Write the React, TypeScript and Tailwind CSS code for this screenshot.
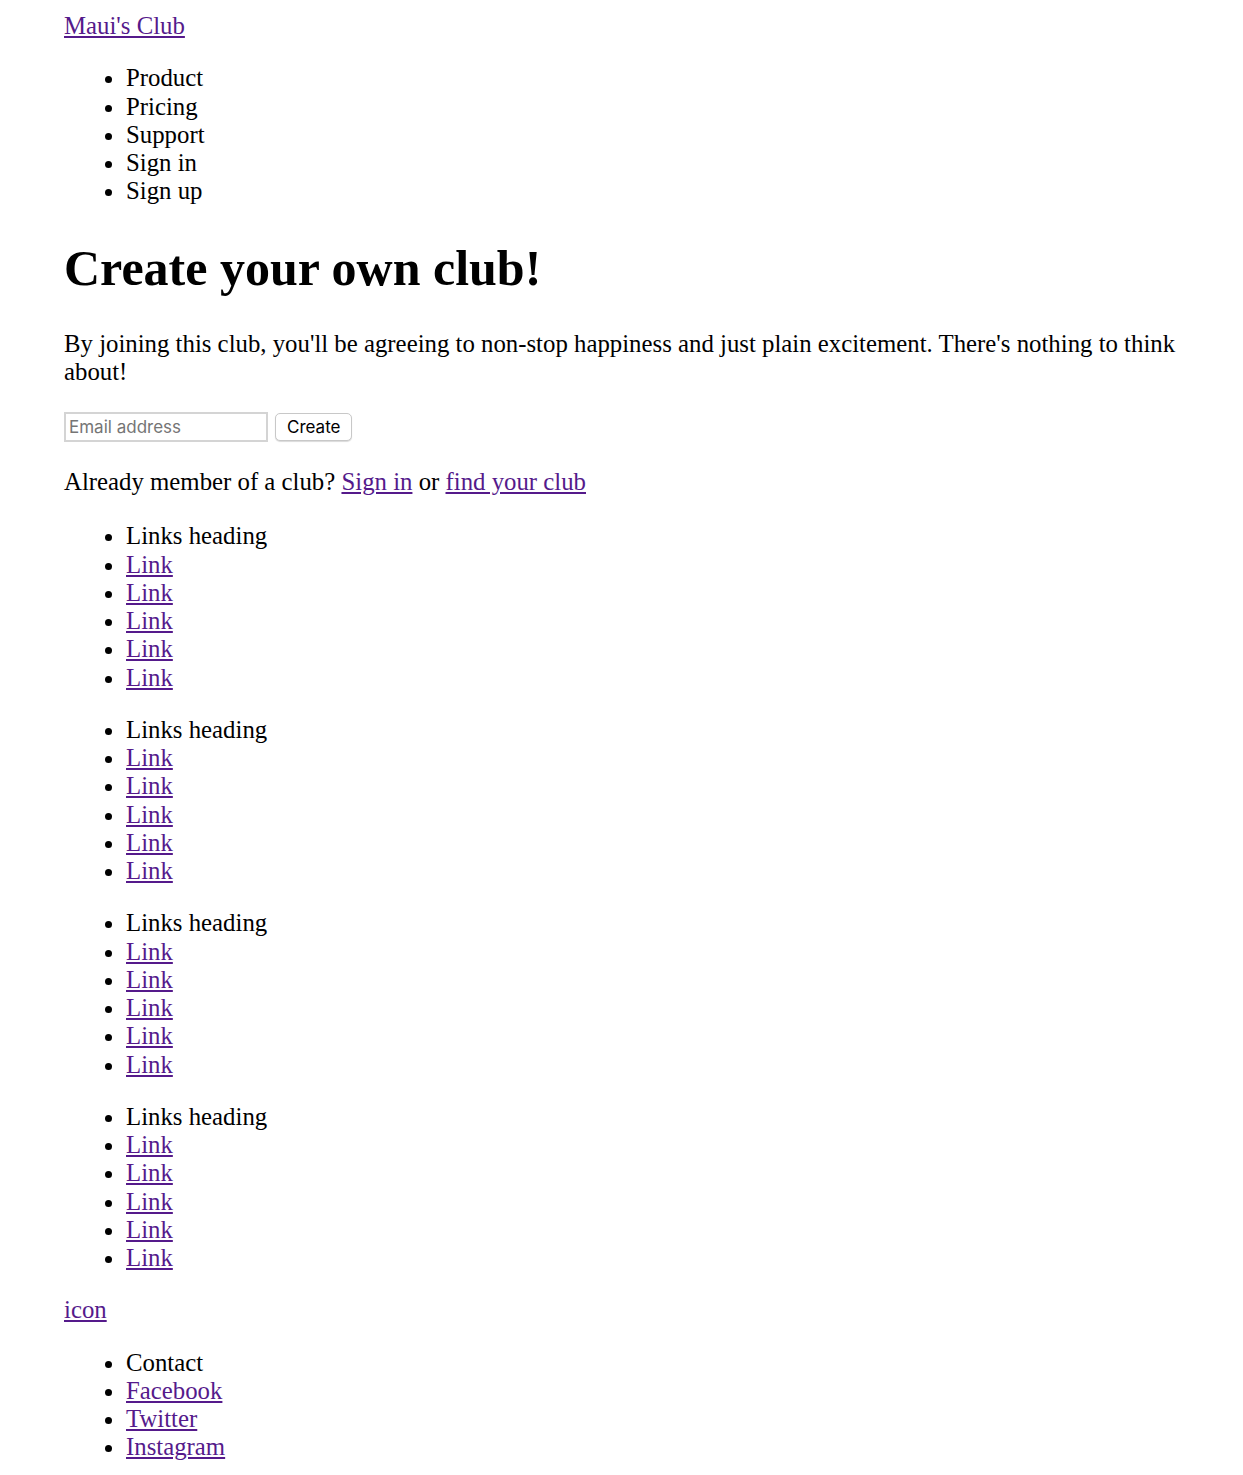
import React from "react";

const linkCls = "text-[#551a8b] underline";

const FooterList: React.FC<{ heading: string; links: string[] }> = ({ heading, links }) => (
  <ul className="list-disc pl-[62px] my-[24px]">
    <li>{heading}</li>
    {links.map((l, i) => (
      <li key={i}>
        <a href="#" className={linkCls}>
          {l}
        </a>
      </li>
    ))}
  </ul>
);

export default function App() {
  const links = ["Link", "Link", "Link", "Link", "Link"];
  return (
    <div className="bg-white text-black pl-[64px] pr-[30px] pt-[12px] text-[24.8px] leading-[28.25px] font-['Liberation_Serif',serif]">
      {/* Header */}
      <a href="#" className={linkCls}>
        Maui's Club
      </a>
      <ul className="list-disc pl-[62px] my-[24px]">
        <li>Product</li>
        <li>Pricing</li>
        <li>Support</li>
        <li>Sign in</li>
        <li>Sign up</li>
      </ul>

      {/* Hero */}
      <h1 className="text-[50px] leading-[60px] font-bold my-[32px]">Create your own club!</h1>
      <p className="my-[24px]">
        By joining this club, you'll be agreeing to non-stop happiness and just plain excitement. There's nothing to
        think about!
      </p>
      <form className="flex items-center gap-[7px] py-[2px] font-['Inter',sans-serif] text-[17px] leading-none">
        <input
          type="email"
          placeholder="Email address"
          className="w-[204px] h-[30px] border-2 border-[#d4d4d4] px-[3px] placeholder:text-[#757575] outline-none"
        />
        <button
          type="button"
          className="h-[28px] px-[11px] border border-[#c8c8c8] rounded-[5px] bg-white shadow-[0_1px_1px_rgba(0,0,0,0.15)]"
        >
          Create
        </button>
      </form>
      <p className="mt-[24px] mb-[26px]">
        Already member of a club?{" "}
        <a href="#" className={linkCls}>
          Sign in
        </a>{" "}
        or{" "}
        <a href="#" className={linkCls}>
          find your club
        </a>
      </p>

      {/* Footer */}
      <FooterList heading="Links heading" links={links} />
      <FooterList heading="Links heading" links={links} />
      <FooterList heading="Links heading" links={links} />
      <FooterList heading="Links heading" links={links} />
      <a href="#" className={linkCls}>
        icon
      </a>
      <ul className="list-disc pl-[62px] mt-[24px] pb-[14px]">
        <li>Contact</li>
        <li>
          <a href="#" className={linkCls}>
            Facebook
          </a>
        </li>
        <li>
          <a href="#" className={linkCls}>
            Twitter
          </a>
        </li>
        <li>
          <a href="#" className={linkCls}>
            Instagram
          </a>
        </li>
      </ul>
    </div>
  );
}
